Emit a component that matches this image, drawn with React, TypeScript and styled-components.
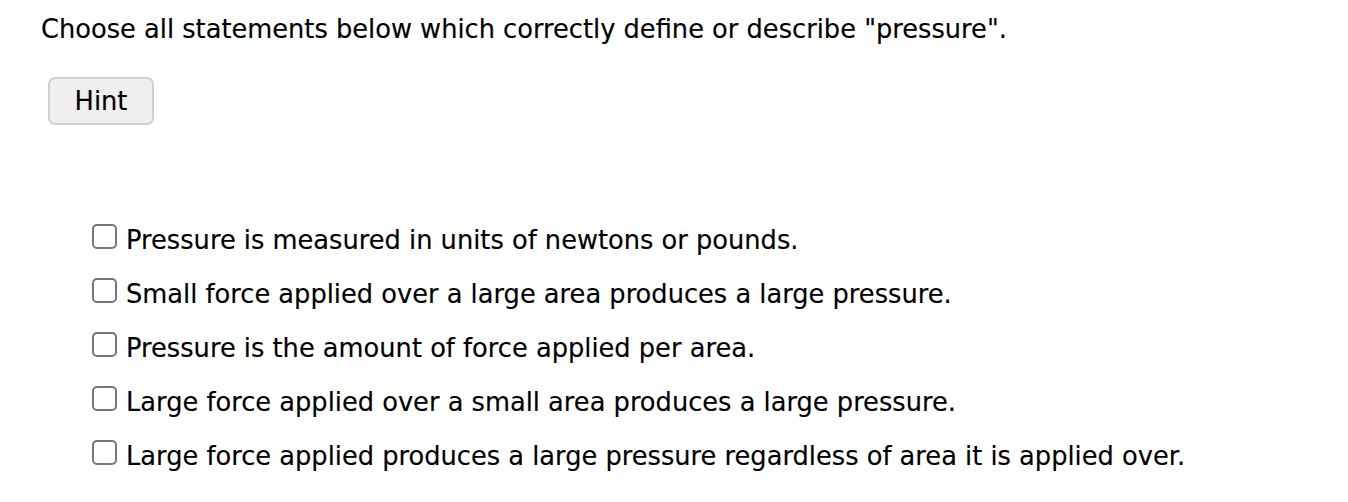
import React from "react";
import styled, { createGlobalStyle } from "styled-components";

const GlobalStyle = createGlobalStyle`
  html, body {
    margin: 0;
    padding: 0;
    background: #ffffff;
  }
  body {
    font-family: "DejaVu Sans", "Verdana", sans-serif;
    color: #000000;
  }
`;

const Page = styled.div`
  padding: 14px 0 0 41px;
  font-size: 25.7px;
  line-height: 30px;
`;

const Prompt = styled.div`
  margin: 0;
  white-space: nowrap;
  -webkit-text-stroke: 0.15px #000000;
`;

const HintButton = styled.button`
  display: flex;
  align-items: center;
  justify-content: center;
  box-sizing: border-box;
  width: 106px;
  height: 48px;
  margin: 33px 0 0 7px;
  padding: 0 0 1px 0;
  font-family: inherit;
  font-size: 25.7px;
  color: #000000;
  background: #efefef;
  border: 2px solid #cfcfcf;
  border-radius: 7px;
  cursor: pointer;
  -webkit-text-stroke: 0.15px #000000;
`;

const Options = styled.div`
  display: flex;
  flex-direction: column;
  margin-top: 88px;
  padding-left: 51px;
`;

const Option = styled.label`
  display: flex;
  align-items: flex-start;
  height: 54px;
  line-height: 54px;
  white-space: nowrap;
  cursor: pointer;
  -webkit-text-stroke: 0.15px #000000;
`;

const Box = styled.input.attrs({ type: "checkbox" })`
  appearance: none;
  -webkit-appearance: none;
  box-sizing: border-box;
  flex: none;
  width: 25px;
  height: 25px;
  margin: 11px 9px 0 0;
  border: 2px solid #767676;
  border-radius: 5px;
  background: #ffffff;
  cursor: pointer;
  &:checked {
    background: #0075ff;
    border-color: #0075ff;
  }
`;

const options = [
  "Pressure is measured in units of newtons or pounds.",
  "Small force applied over a large area produces a large pressure.",
  "Pressure is the amount of force applied per area.",
  "Large force applied over a small area produces a large pressure.",
  "Large force applied produces a large pressure regardless of area it is applied over.",
];

export default function App() {
  return (
    <>
      <GlobalStyle />
      <Page>
        <Prompt>Choose all statements below which correctly define or describe "pressure".</Prompt>
        <HintButton type="button">Hint</HintButton>
        <Options>
          {options.map((text) => (
            <Option key={text}>
              <Box />
              <span>{text}</span>
            </Option>
          ))}
        </Options>
      </Page>
    </>
  );
}
